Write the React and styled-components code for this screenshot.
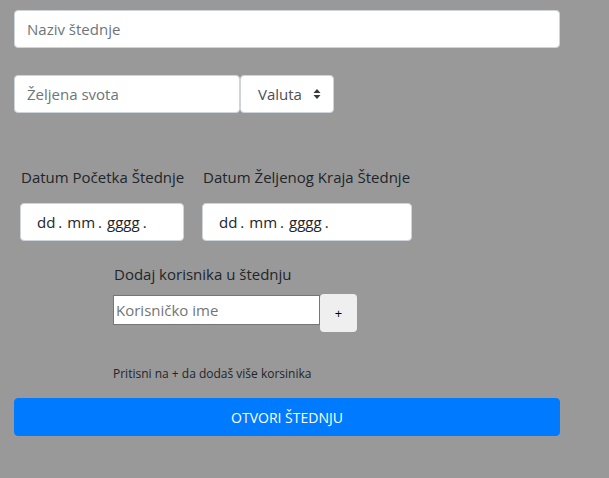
import React from 'react';
import styled, { createGlobalStyle } from 'styled-components';

const GlobalStyle = createGlobalStyle`
  html, body {
    margin: 0;
    padding: 0;
    background: #999999;
  }
  body {
    font-family: 'Open Sans', 'Noto Sans', sans-serif;
    color: #212529;
  }
  * {
    box-sizing: border-box;
  }
`;

const Page = styled.div`
  min-height: 478px;
  padding: 10px 0 0 14px;
`;

const Form = styled.form`
  width: 546px;
  display: flex;
  flex-direction: column;
`;

const FormControl = styled.input`
  display: block;
  width: ${(props) => props.width || '100%'};
  height: 38px;
  padding: 6px 12px;
  font-family: inherit;
  font-size: 15px;
  color: #495057;
  background: #fff;
  border: 1px solid #ced4da;
  border-radius: 4px;
  outline: none;

  &::placeholder {
    color: #6c757d;
  }
`;

const AmountRow = styled.div`
  display: flex;
  margin-top: 27px;
`;

const SelectBox = styled.div`
  width: 94px;
  height: 38px;
  display: flex;
  align-items: center;
  justify-content: space-between;
  padding: 0 12px 0 17px;
  font-size: 15px;
  color: #495057;
  background: #fff;
  border: 1px solid #ced4da;
  border-radius: 4px;
`;

const DateRow = styled.div`
  display: flex;
  margin-top: 52px;
  margin-left: 6px;
  gap: 18px;
`;

const DateGroup = styled.div`
  width: ${(props) => props.width}px;
  display: flex;
  flex-direction: column;
`;

const Label = styled.label`
  display: block;
  font-size: 15px;
  line-height: 24px;
  padding-left: 1px;
  white-space: nowrap;
  margin-bottom: ${(props) => props.gap || 14}px;
`;

const DateField = styled.div`
  height: 38px;
  display: flex;
  align-items: center;
  padding: 0 16px;
  font-size: 15px;
  color: #212529;
  background: #fff;
  border: 1px solid #ced4da;
  border-radius: 4px;
`;

const Segment = styled.span`
  margin-right: ${(props) => (props.dot ? 5 : 3)}px;
`;

const UserSection = styled.div`
  margin-top: 21px;
  margin-left: 99px;
`;

const UserRow = styled.div`
  display: flex;
  align-items: flex-start;
`;

const UserInput = styled.input`
  width: 207px;
  height: 30px;
  margin-top: 1px;
  padding: 1px 2px;
  font-family: inherit;
  font-size: 15px;
  color: #000;
  background: #fff;
  border: 1px solid #767676;
  border-radius: 0;
  outline: none;

  &::placeholder {
    color: #757575;
  }
`;

const AddButton = styled.button`
  width: 37px;
  height: 38px;
  font-family: inherit;
  font-size: 13px;
  color: #000;
  background: #efefef;
  border: none;
  border-radius: 4px;
`;

const Hint = styled.p`
  margin: 33px 0 0;
  font-size: 12px;
  line-height: 18px;
`;

const SubmitButton = styled.button`
  width: 100%;
  height: 38px;
  margin-top: 15px;
  font-family: inherit;
  font-size: 14px;
  text-transform: uppercase;
  color: #fff;
  background: #007bff;
  border: 1px solid #007bff;
  border-radius: 4px;
`;

const SortIcon = () => (
  <svg width="8" height="12" viewBox="0 0 8 12">
    <path d="M4 1 L7.5 5 H0.5 Z M4 11 L7.5 7 H0.5 Z" fill="#343a40" />
  </svg>
);

const DatePlaceholder = () => (
  <>
    <Segment>dd</Segment>
    <Segment dot>.</Segment>
    <Segment>mm</Segment>
    <Segment dot>.</Segment>
    <Segment>gggg</Segment>
    <Segment>.</Segment>
  </>
);

const App = () => (
  <Page>
    <GlobalStyle />
    <Form onSubmit={(e) => e.preventDefault()}>
      <FormControl placeholder="Naziv štednje" />
      <AmountRow>
        <FormControl width="226px" placeholder="Željena svota" />
        <SelectBox>
          <span>Valuta</span>
          <SortIcon />
        </SelectBox>
      </AmountRow>
      <DateRow>
        <DateGroup width={164}>
          <Label>Datum Početka Štednje</Label>
          <DateField>
            <DatePlaceholder />
          </DateField>
        </DateGroup>
        <DateGroup width={210}>
          <Label>Datum Željenog Kraja Štednje</Label>
          <DateField>
            <DatePlaceholder />
          </DateField>
        </DateGroup>
      </DateRow>
      <UserSection>
        <Label gap={8}>Dodaj korisnika u štednju</Label>
        <UserRow>
          <UserInput placeholder="Korisničko ime" />
          <AddButton type="button">+</AddButton>
        </UserRow>
        <Hint>Pritisni na + da dodaš više korsinika</Hint>
      </UserSection>
      <SubmitButton type="submit">Otvori štednju</SubmitButton>
    </Form>
  </Page>
);

export default App;
